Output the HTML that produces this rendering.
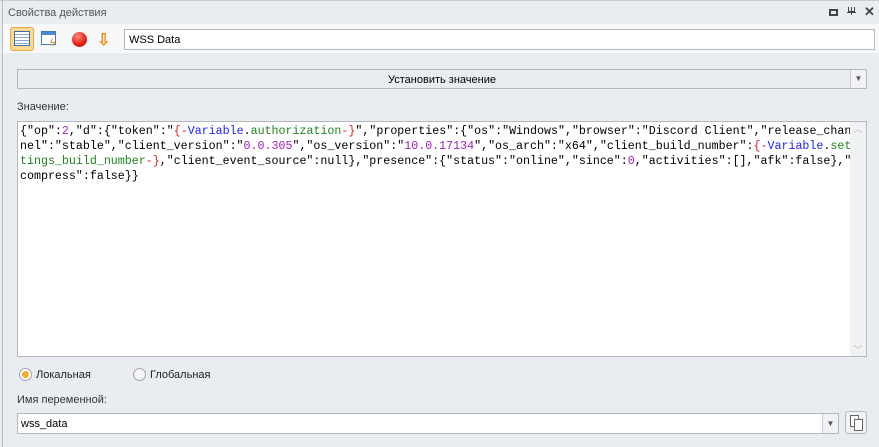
<!DOCTYPE html>
<html><head><meta charset="utf-8"><style>
*{box-sizing:border-box;margin:0;padding:0}
body{width:879px;height:447px;background:#e9ecf1;font-family:"Liberation Sans",sans-serif;font-size:11px;color:#222;position:relative;overflow:hidden}
.abs{position:absolute}
.mono{font-family:"Liberation Mono",monospace;font-size:11.65px;line-height:15px;white-space:pre;color:#000}
.p{color:#a020c0}.r{color:#e02020}.b{color:#2020ff}.g{color:#208020}
</style></head><body>
<div class="abs" style="left:0;top:0;width:879px;height:1px;background:#c8ccd2"></div>
<div class="abs" style="left:2px;top:0;width:1px;height:447px;background:#b8bcc4"></div>
<div class="abs" style="left:8px;top:7px;color:#555;font-size:11px">Свойства действия</div>
<div class="abs" style="left:829px;top:9px;width:9px;height:7px;border:2px solid #444"></div>
<div class="abs" style="left:851px;top:7px;width:1px;height:8px;background:#444"></div>
<div class="abs" style="left:848px;top:7px;width:7px;height:5px;border:1px solid #444;border-top:none"></div>
<div class="abs" style="left:847px;top:12px;width:9px;height:1px;background:#444"></div>
<div class="abs" style="left:864px;top:4px;font-size:13px;color:#444;font-weight:bold">✕</div>
<div class="abs" style="left:3px;top:24px;width:876px;height:29px;background:#f7f8fa"></div>
<div class="abs" style="left:10px;top:27px;width:24px;height:24px;background:#fbd98f;border:1px solid #e3a94a;border-radius:3px"></div>
<div class="abs" style="left:14px;top:31px;width:16px;height:15px;border:1px solid #3a6ea8;background:repeating-linear-gradient(#fff 0 2px,#8aa8cc 2px 3px)"></div>
<div class="abs" style="left:41px;top:31px;width:15px;height:14px;border:1px solid #4a7ab8;background:linear-gradient(#4a8ad8 0 3px,#fff 3px)"></div>
<div class="abs" style="left:50px;top:38px;color:#e0a020;font-size:10px;font-weight:bold">ϟ</div>
<div class="abs" style="left:72px;top:32px;width:15px;height:15px;border-radius:50%;background:radial-gradient(circle at 40% 30%,#ff8a7a,#e02010 60%,#b01000)"></div>
<div class="abs" style="left:97px;top:30px;color:#f09010;font-size:16px;font-weight:bold">⇩</div>
<div class="abs" style="left:124px;top:29px;width:751px;height:21px;background:#fff;border:1px solid #b4b8be;padding:4px 4px;color:#000">WSS Data</div>
<div class="abs" style="left:17px;top:69px;width:850px;height:20px;background:#e9ecf1;border:1px solid #b4b8be;text-align:center;padding-top:4px;color:#000">Установить значение</div>
<div class="abs" style="left:850px;top:70px;width:16px;height:18px;border-left:1px solid #c8ccd2;background:#f0f2f5;text-align:center;font-size:8px;color:#555;padding-top:4px">▼</div>
<div class="abs" style="left:17px;top:101px;color:#333">Значение:</div>
<div class="abs" style="left:17px;top:121px;width:850px;height:236px;background:#fff;border:1px solid #b4b8be;overflow:hidden">
<div class="abs" style="left:832px;top:0;width:16px;height:234px;background:#f0f1f3;color:#bbb;font-size:9px;text-align:center">︿<div style="position:absolute;bottom:0;width:16px">﹀</div></div>
<div class="mono abs" style="left:2px;top:2px;width:830px;overflow:hidden">{"op":<span class="p">2</span>,"d":{"token":"<span class="r">{-</span><span class="b">Variable</span>.<span class="g">authorization</span><span class="r">-}</span>","properties":{"os":"Windows","browser":"Discord Client","release_chan
nel":"stable","client_version":"<span class="p">0.0.305</span>","os_version":"<span class="p">10.0.17134</span>","os_arch":"x64","client_build_number":<span class="r">{-</span><span class="b">Variable</span>.<span class="g">set</span>
<span class="g">tings_build_number</span><span class="r">-}</span>,"client_event_source":null},"presence":{"status":"online","since":<span class="p">0</span>,"activities":[],"afk":false},"
compress":false}}</div></div>
<div class="abs" style="left:19px;top:368px;width:13px;height:13px;border-radius:50%;border:1px solid #a0a4aa;background:#fff"><div style="position:absolute;left:2px;top:2px;width:7px;height:7px;border-radius:50%;background:#f0b030"></div></div>
<div class="abs" style="left:36px;top:369px">Локальная</div>
<div class="abs" style="left:133px;top:368px;width:13px;height:13px;border-radius:50%;border:1px solid #a0a4aa;background:#f4f4f4"></div>
<div class="abs" style="left:150px;top:369px">Глобальная</div>
<div class="abs" style="left:17px;top:394px;color:#333">Имя переменной:</div>
<div class="abs" style="left:17px;top:413px;width:822px;height:21px;background:#fff;border:1px solid #b4b8be;padding:4px 3px;color:#000">wss_data</div>
<div class="abs" style="left:822px;top:414px;width:16px;height:19px;border-left:1px solid #c8ccd2;background:#f0f2f5;text-align:center;font-size:8px;color:#555;padding-top:5px">▼</div>
<div class="abs" style="left:845px;top:411px;width:22px;height:23px;border:1px solid #b4b8be;border-radius:3px;background:#f0f2f5"></div>
<div class="abs" style="left:850px;top:415px;width:9px;height:12px;border:1px solid #666;background:#fff"></div>
<div class="abs" style="left:854px;top:419px;width:9px;height:12px;border:1px solid #666;background:#fff"></div>
</body></html>
